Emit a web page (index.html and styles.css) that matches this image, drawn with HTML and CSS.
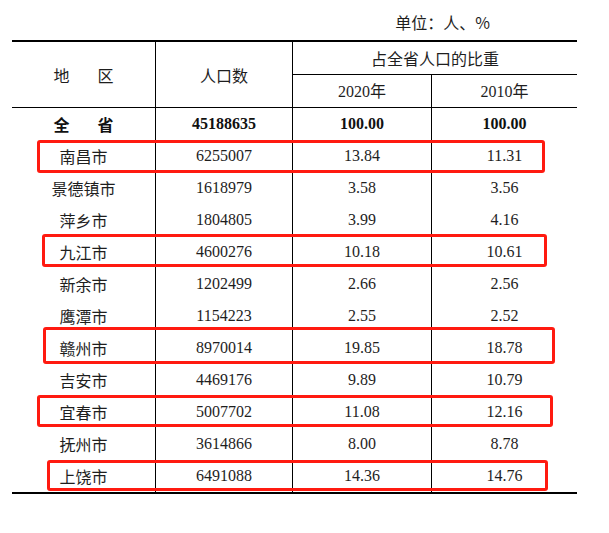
FILE: index.html
```html
<!DOCTYPE html>
<html lang="zh-CN">
<head>
<meta charset="utf-8">
<title>江西省各设区市人口</title>
<link rel="stylesheet" href="styles.css">
</head>
<body>
<div class="page">
  <div class="unit">单位：人、%</div>
  <table class="pop">
    <colgroup>
      <col class="c1"><col class="c2"><col class="c3"><col class="c4">
    </colgroup>
    <thead>
      <tr class="h1">
        <th rowspan="2" class="vr hb"><span class="spread"><span>地</span><span>区</span></span></th>
        <th rowspan="2" class="vr hb">人口数</th>
        <th colspan="2" class="hs">占全省人口的比重</th>
      </tr>
      <tr class="h2">
        <th class="vr hb"><span class="num">2020</span>年</th>
        <th class="hb"><span class="num">2010</span>年</th>
      </tr>
    </thead>
    <tbody>
      <tr class="total">
        <td class="vr"><span class="spread bold"><span>全</span><span>省</span></span></td>
        <td class="vr num b">45188635</td>
        <td class="vr num b">100.00</td>
        <td class="num b">100.00</td>
      </tr>
      <tr><td class="vr">南昌市</td><td class="vr num">6255007</td><td class="vr num">13.84</td><td class="num">11.31</td></tr>
      <tr><td class="vr">景德镇市</td><td class="vr num">1618979</td><td class="vr num">3.58</td><td class="num">3.56</td></tr>
      <tr><td class="vr">萍乡市</td><td class="vr num">1804805</td><td class="vr num">3.99</td><td class="num">4.16</td></tr>
      <tr><td class="vr">九江市</td><td class="vr num">4600276</td><td class="vr num">10.18</td><td class="num">10.61</td></tr>
      <tr><td class="vr">新余市</td><td class="vr num">1202499</td><td class="vr num">2.66</td><td class="num">2.56</td></tr>
      <tr><td class="vr">鹰潭市</td><td class="vr num">1154223</td><td class="vr num">2.55</td><td class="num">2.52</td></tr>
      <tr><td class="vr">赣州市</td><td class="vr num">8970014</td><td class="vr num">19.85</td><td class="num">18.78</td></tr>
      <tr><td class="vr">吉安市</td><td class="vr num">4469176</td><td class="vr num">9.89</td><td class="num">10.79</td></tr>
      <tr><td class="vr">宜春市</td><td class="vr num">5007702</td><td class="vr num">11.08</td><td class="num">12.16</td></tr>
      <tr><td class="vr">抚州市</td><td class="vr num">3614866</td><td class="vr num">8.00</td><td class="num">8.78</td></tr>
      <tr><td class="vr">上饶市</td><td class="vr num">6491088</td><td class="vr num">14.36</td><td class="num">14.76</td></tr>
    </tbody>
  </table>
  <div class="mark m-nanchang"></div>
  <div class="mark m-jiujiang"></div>
  <div class="mark m-ganzhou"></div>
  <div class="mark m-yichun"></div>
  <div class="mark m-shangrao"></div>
</div>
</body>
</html>
```

FILE: styles.css
```css
html, body {
  margin: 0;
  padding: 0;
  background: #ffffff;
}

.page {
  position: relative;
  width: 609px;
  height: 533px;
  padding-left: 12px;
  box-sizing: border-box;
  font-family: "Noto Sans CJK SC", "Liberation Sans", sans-serif;
  font-size: 16px;
  color: #1e1e1e;
}

.unit {
  box-sizing: border-box;
  width: 565px;
  height: 40px;
  padding: 14px 87px 10px 0;
  line-height: 16px;
  text-align: right;
}

.pop {
  width: 565px;
  table-layout: fixed;
  border-collapse: separate;
  border-spacing: 0;
  border-top: 2px solid #000;
  border-bottom: 2px solid #000;
}

.c1 { width: 144px; }
.c2 { width: 137px; }
.c3 { width: 139px; }
.c4 { width: 145px; }

.pop th,
.pop td {
  padding: 0;
  text-align: center;
  vertical-align: middle;
  font-weight: normal;
  line-height: 16px;
}

.h1 th.hs {
  height: 32px;
  border-bottom: 1px solid #000;
}

.h2 th {
  height: 32px;
}

.hb {
  border-bottom: 1px solid #000;
}

.vr {
  border-right: 1px solid #000;
}

.pop tbody td {
  height: 32px;
}

.num {
  font-family: "Liberation Serif", "Times New Roman", serif;
  font-size: 16px;
}

.pop td.b {
  font-weight: bold;
  color: #111;
}

.spread {
  display: inline-flex;
  gap: 28px;
}

.spread.bold {
  font-weight: bold;
  gap: 28px;
  color: #111;
}

.mark {
  position: absolute;
  box-sizing: border-box;
  border: 3px solid #ff1a10;
  border-radius: 3px;
}

.m-nanchang { left: 37px; top: 140px; width: 508px; height: 33px; }
.m-jiujiang { left: 42px; top: 234px; width: 505px; height: 33px; }
.m-ganzhou  { left: 43px; top: 327px; width: 512px; height: 37px; }
.m-yichun   { left: 37px; top: 395px; width: 516px; height: 32px; }
.m-shangrao { left: 47px; top: 460px; width: 501px; height: 31px; }
```
